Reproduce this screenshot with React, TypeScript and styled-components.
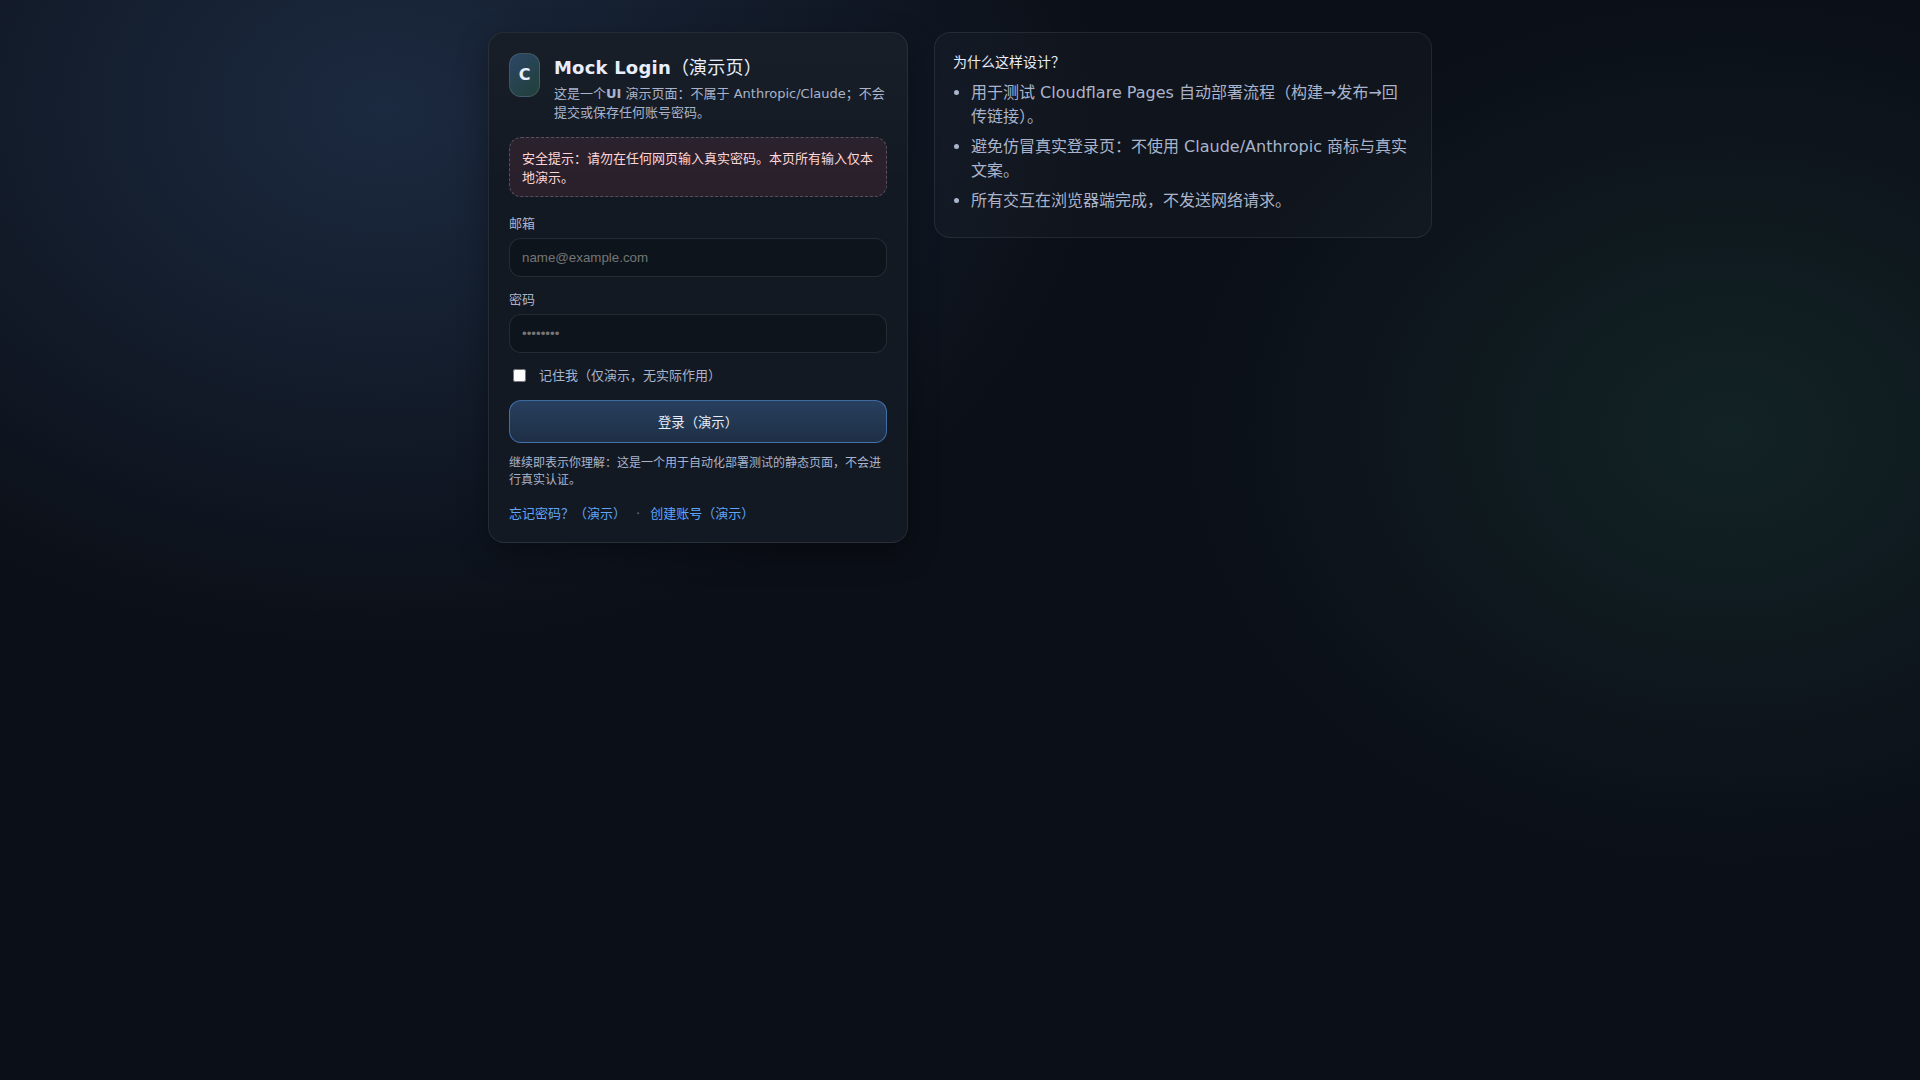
import React from "react";
import styled, { createGlobalStyle } from "styled-components";

const GlobalStyle = createGlobalStyle`
  *, *::before, *::after { box-sizing: border-box; }
  html { height: 100%; }
  body {
    margin: 0;
    min-height: 100%;
    color: #e8eefc;
    font-family: "DejaVu Sans", "Noto Sans CJK SC", sans-serif;
    font-size: 16px;
    line-height: 24px;
    background:
      radial-gradient(1200px 900px at 20% 10%, rgba(102, 163, 250, 0.18), transparent 60%),
      radial-gradient(1000px 800px at 90% 40%, rgba(80, 210, 160, 0.1), transparent 55%),
      #0b0f17;
  }
`;

const Page = styled.main`
  max-width: 980px;
  margin: 0 auto;
  padding: 32px 18px;
  display: grid;
  grid-template-columns: 420px 1fr;
  gap: 26px;
  align-items: start;

  @media (max-width: 860px) {
    grid-template-columns: 1fr;
  }
`;

const LoginCard = styled.section`
  padding: 20px 20px 19px;
  border: 1px solid rgba(255, 255, 255, 0.08);
  border-radius: 16px;
  background: linear-gradient(180deg, rgba(255, 255, 255, 0.025), transparent 30%), #121923;
  box-shadow: 0 10px 30px rgba(0, 0, 0, 0.35);
`;

const Header = styled.header`
  display: flex;
  align-items: flex-start;
  gap: 14px;
  margin-bottom: 15px;
`;

const Logo = styled.div`
  flex: 0 0 31px;
  height: 44px;
  display: grid;
  place-items: center;
  border: 1px solid rgba(255, 255, 255, 0.12);
  border-radius: 12px;
  background: linear-gradient(135deg, rgba(96, 165, 250, 0.3), rgba(74, 190, 128, 0.22));
  font-weight: 700;
`;

const Title = styled.h1`
  margin: 3px 0 4px;
  font-size: 18px;
  line-height: 24px;
  font-weight: 400;
  letter-spacing: 0.2px;
`;

const Subtitle = styled.p`
  margin: 0;
  color: #a9b4cc;
  font-size: 13px;
  line-height: 19px;
`;

const Notice = styled.div`
  padding: 11px 12px 9px;
  border: 1px dashed rgba(255, 255, 255, 0.22);
  border-radius: 12px;
  background: rgba(248, 100, 120, 0.1);
  color: #ffd5d5;
  font-size: 13px;
  line-height: 19px;
`;

const Form = styled.form`
  margin-top: 17px;
  display: grid;
  gap: 13px;
`;

const Field = styled.div`
  display: grid;
  gap: 5px;
`;

const Label = styled.label`
  color: #a9b4cc;
  font-size: 13px;
  line-height: 19px;
`;

const Input = styled.input`
  width: 100%;
  height: 39px;
  padding: 0 12px;
  border: 1px solid rgba(255, 255, 255, 0.1);
  border-radius: 12px;
  background: #0d141c;
  color: #e8eefc;
  font-family: "Liberation Sans", "Noto Sans CJK SC", sans-serif;
  outline: none;

  &::placeholder { color: #757575; }
  &:focus { border-color: rgba(96, 165, 250, 0.6); }
`;

const Remember = styled.div`
  display: flex;
  align-items: center;
  gap: 10px;
`;

const Submit = styled.button`
  width: 100%;
  margin-top: 2px;
  padding: 13px 12px 11px;
  border: 1px solid rgba(96, 165, 250, 0.5);
  border-radius: 12px;
  background: linear-gradient(180deg, rgba(96, 165, 250, 0.28), rgba(96, 165, 250, 0.16));
  color: #e8eefc;
  font-family: "Liberation Sans", "Noto Sans CJK SC", sans-serif;
  line-height: 17px;
  cursor: pointer;
`;

const FinePrint = styled.p`
  margin: 12px 0 0;
  color: #a9b4cc;
  font-size: 12px;
  line-height: 17px;
`;

const Links = styled.nav`
  display: flex;
  align-items: center;
  gap: 10px;
  margin-top: 15px;
  color: #a9b4cc;
  font-size: 13px;
  line-height: 19px;
`;

const Link = styled.a`
  color: #60a5fa;
  text-decoration: none;
  &:hover { text-decoration: underline; }
`;

const Dot = styled.span`
  opacity: 0.6;
`;

const InfoCard = styled.aside`
  padding: 18px;
  border: 1px solid rgba(255, 255, 255, 0.08);
  border-radius: 16px;
  background: rgba(255, 255, 255, 0.025);
`;

const InfoTitle = styled.h2`
  margin: 0 0 8px;
  font-size: 14px;
  line-height: 22px;
  font-weight: 400;
`;

const InfoList = styled.ul`
  margin: 0;
  padding-left: 18px;
  color: #a9b4cc;
`;

const InfoItem = styled.li`
  margin-bottom: 6px;
`;

const reasons = [
  "用于测试 Cloudflare Pages 自动部署流程（构建→发布→回传链接）。",
  "避免仿冒真实登录页：不使用 Claude/Anthropic 商标与真实文案。",
  "所有交互在浏览器端完成，不发送网络请求。",
];

export default function App() {
  return (
    <>
      <GlobalStyle />
      <Page lang="zh-CN">
        <LoginCard>
          <Header>
            <Logo aria-hidden="true">C</Logo>
            <div>
              <Title><strong>Mock Login</strong>（演示页）</Title>
              <Subtitle>
                这是一个<strong>UI</strong> 演示页面：不属于 Anthropic/Claude；不会提交或保存任何账号密码。
              </Subtitle>
            </div>
          </Header>
          <Notice role="note">安全提示：请勿在任何网页输入真实密码。本页所有输入仅本地演示。</Notice>
          <Form onSubmit={(e) => e.preventDefault()}>
            <Field>
              <Label htmlFor="email">邮箱</Label>
              <Input id="email" type="email" placeholder="name@example.com" autoComplete="off" />
            </Field>
            <Field>
              <Label htmlFor="password">密码</Label>
              <Input id="password" type="password" placeholder="••••••••" autoComplete="off" />
            </Field>
            <Remember>
              <input id="remember" type="checkbox" />
              <Label htmlFor="remember">记住我（仅演示，无实际作用）</Label>
            </Remember>
            <Submit type="submit">登录（演示）</Submit>
          </Form>
          <FinePrint>继续即表示你理解：这是一个用于自动化部署测试的静态页面，不会进行真实认证。</FinePrint>
          <Links>
            <Link href="#forgot">忘记密码？（演示）</Link>
            <Dot>·</Dot>
            <Link href="#create">创建账号（演示）</Link>
          </Links>
        </LoginCard>
        <InfoCard>
          <InfoTitle>为什么这样设计？</InfoTitle>
          <InfoList>
            {reasons.map((text) => (
              <InfoItem key={text}>{text}</InfoItem>
            ))}
          </InfoList>
        </InfoCard>
      </Page>
    </>
  );
}
